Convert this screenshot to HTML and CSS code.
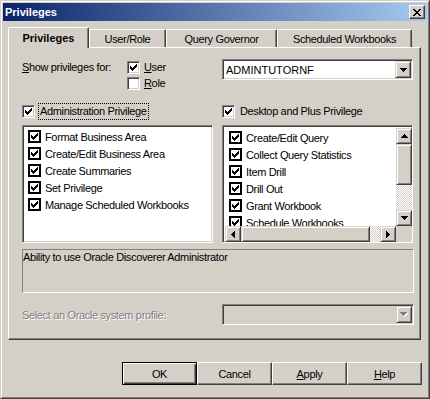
FILE: index.html
```html
<!DOCTYPE html>
<html>
<head>
<meta charset="utf-8">
<title>Privileges</title>
<link rel="stylesheet" href="styles.css">
</head>
<body>
<svg class="defs" width="0" height="0" aria-hidden="true">
  <defs>
    <path id="chk" d="M0 2h1v3H0zM1 3h1v3H1zM2 4h1v3H2zM3 3h1v3H3zM4 2h1v3H4zM5 1h1v3H5zM6 0h1v3H6z"/>
    <path id="dn" d="M0 0h7v1H0zM1 1h5v1H1zM2 2h3v1H2zM3 3h1v1H3z"/>
    <path id="up" d="M3 0h1v1H3zM2 1h3v1H2zM1 2h5v1H1zM0 3h7v1H0z"/>
    <path id="lt" d="M3 0h1v7H3zM2 1h1v5H2zM1 2h1v3H1zM0 3h1v1H0z"/>
    <path id="rt" d="M0 0h1v7H0zM1 1h1v5H1zM2 2h1v3H2zM3 3h1v1H3z"/>
    <path id="x" d="M0 0h2v1H0zM6 0h2v1H6zM1 1h2v1H1zM5 1h2v1H5zM2 2h4v1H2zM3 3h2v1H3zM2 4h4v1H2zM1 5h2v1H1zM5 5h2v1H5zM0 6h2v1H0zM6 6h2v1H6z"/>
  </defs>
</svg>
<div class="window">
  <div class="frame">
    <div class="titlebar">
      <span class="title">Privileges</span>
      <span class="close"><svg width="8" height="7" shape-rendering="crispEdges"><use href="#x"/></svg></span>
    </div>
    <div class="body">
      <div class="tabs">
        <div class="tab sel w1">Privileges</div>
        <div class="tab w2">User/Role</div>
        <div class="tab w3">Query Governor</div>
        <div class="tab w4">Scheduled Workbooks</div>
      </div>
      <div class="panel">
        <div class="grid">
          <div class="showrow">
            <span class="showlabel"><u>S</u>how privileges for:</span>
            <div class="opts">
              <div class="opt"><span class="cb"><svg width="7" height="7" shape-rendering="crispEdges"><use href="#chk"/></svg></span><span class="optlabel"><u>U</u>ser</span></div>
              <div class="opt"><span class="cb"></span><span class="optlabel"><u>R</u>ole</span></div>
            </div>
          </div>
          <div class="combo">
            <span class="combotext">ADMINTUTORNF</span>
            <span class="combobtn"><svg width="7" height="4" shape-rendering="crispEdges"><use href="#dn"/></svg></span>
          </div>

          <div class="hdr"><span class="cb"><svg width="7" height="7" shape-rendering="crispEdges"><use href="#chk"/></svg></span><span class="hdrlabel focus">Administration Privilege</span></div>
          <div class="hdr"><span class="cb"><svg width="7" height="7" shape-rendering="crispEdges"><use href="#chk"/></svg></span><span class="hdrlabel">Desktop and Plus Privilege</span></div>

          <div class="list left">
            <div class="row"><span class="lcb"><svg width="7" height="7" shape-rendering="crispEdges"><use href="#chk"/></svg></span>Format Business Area</div>
            <div class="row"><span class="lcb"><svg width="7" height="7" shape-rendering="crispEdges"><use href="#chk"/></svg></span>Create/Edit Business Area</div>
            <div class="row"><span class="lcb"><svg width="7" height="7" shape-rendering="crispEdges"><use href="#chk"/></svg></span>Create Summaries</div>
            <div class="row"><span class="lcb"><svg width="7" height="7" shape-rendering="crispEdges"><use href="#chk"/></svg></span>Set Privilege</div>
            <div class="row"><span class="lcb"><svg width="7" height="7" shape-rendering="crispEdges"><use href="#chk"/></svg></span>Manage Scheduled Workbooks</div>
          </div>
          <div class="list scroll">
            <div class="items">
              <div class="row"><span class="lcb"><svg width="7" height="7" shape-rendering="crispEdges"><use href="#chk"/></svg></span>Create/Edit Query</div>
              <div class="row"><span class="lcb"><svg width="7" height="7" shape-rendering="crispEdges"><use href="#chk"/></svg></span>Collect Query Statistics</div>
              <div class="row"><span class="lcb"><svg width="7" height="7" shape-rendering="crispEdges"><use href="#chk"/></svg></span>Item Drill</div>
              <div class="row"><span class="lcb"><svg width="7" height="7" shape-rendering="crispEdges"><use href="#chk"/></svg></span>Drill Out</div>
              <div class="row"><span class="lcb"><svg width="7" height="7" shape-rendering="crispEdges"><use href="#chk"/></svg></span>Grant Workbook</div>
              <div class="row"><span class="lcb"><svg width="7" height="7" shape-rendering="crispEdges"><use href="#chk"/></svg></span>Schedule Workbooks</div>
            </div>
            <div class="vscroll">
              <span class="sbtn"><svg width="7" height="4" shape-rendering="crispEdges"><use href="#up"/></svg></span>
              <span class="vthumb"></span>
              <span class="track"></span>
              <span class="sbtn"><svg width="7" height="4" shape-rendering="crispEdges"><use href="#dn"/></svg></span>
            </div>
            <div class="hscroll">
              <span class="sbtn"><svg width="4" height="7" shape-rendering="crispEdges"><use href="#lt"/></svg></span>
              <span class="hthumb"></span>
              <span class="track"></span>
              <span class="sbtn"><svg width="4" height="7" shape-rendering="crispEdges"><use href="#rt"/></svg></span>
            </div>
            <div class="corner"></div>
          </div>
        </div>

        <div class="desc">Ability to use Oracle Discoverer Administrator</div>

        <div class="profile">
          <span class="disabled">Select an Oracle system profile:</span>
          <div class="combo off">
            <span class="combotext"></span>
            <span class="combobtn"><svg width="8" height="5" shape-rendering="crispEdges"><use href="#dn" x="1" y="1" fill="#fff"/><use href="#dn" fill="#808080"/></svg></span>
          </div>
        </div>
      </div>
      <div class="buttons">
        <span class="btn default">OK</span>
        <span class="btn">Cancel</span>
        <span class="btn"><u>A</u>pply</span>
        <span class="btn"><u>H</u>elp</span>
      </div>
    </div>
  </div>
</div>
</body>
</html>
```
FILE: styles.css
```css
* { box-sizing: border-box; }
html, body { margin: 0; padding: 0; }
body {
  width: 430px;
  height: 399px;
  overflow: hidden;
  background: #D4D0C8;
  font-family: "Liberation Sans", Arial, sans-serif;
  font-size: 11px;
  letter-spacing: -0.35px;
  color: #000;
}
.defs { position: absolute; width: 0; height: 0; }
u { text-decoration: underline; text-underline-offset: 1px; }

.window {
  width: 430px;
  height: 399px;
  border: 1px solid;
  border-color: #D4D0C8 #404040 #404040 #D4D0C8;
}
.frame {
  height: 100%;
  border: 1px solid;
  border-color: #fff #808080 #808080 #fff;
  padding: 1px;
  display: flex;
  flex-direction: column;
}

/* title bar */
.titlebar {
  height: 18px;
  flex: none;
  display: flex;
  align-items: center;
  justify-content: space-between;
  padding: 0 2px;
  background: linear-gradient(to right, #0A246A, #A6CAF0);
  color: #fff;
}
.title { font-weight: bold; letter-spacing: 0; }
.close {
  width: 16px;
  height: 14px;
  display: flex;
  align-items: center;
  justify-content: center;
  background: #D4D0C8;
  border: 1px solid;
  border-color: #fff #404040 #404040 #fff;
  box-shadow: inset -1px -1px #808080;
}

/* body */
.body {
  flex: 1;
  display: flex;
  flex-direction: column;
  padding: 6px 5px 0 5px;
}

/* tabs */
.tabs {
  display: flex;
  align-items: flex-end;
  height: 20px;
}
.tab {
  height: 18px;
  display: flex;
  align-items: center;
  justify-content: center;
  background: #D4D0C8;
  border-top: 1px solid #fff;
  border-left: 1px solid #fff;
  border-right: 1px solid #404040;
  box-shadow: inset -1px 0 #808080;
  border-radius: 2px 2px 0 0;
}
.tab.sel {
  height: 21px;
  margin-bottom: -1px;
  position: relative;
  z-index: 1;
  font-weight: bold;
  letter-spacing: 0;
}
.w1 { width: 81px; }
.w2 { width: 77px; }
.w3 { width: 111px; }
.w4 { width: 135px; }

.panel {
  width: 413px;
  height: 293px;
  border: 1px solid;
  border-color: #fff #404040 #404040 #fff;
  box-shadow: inset -1px -1px #808080;
  padding: 11px 0 0 13px;
}

.grid {
  display: grid;
  grid-template-columns: 191px 191px;
  column-gap: 9px;
}

/* show row */
.showrow { display: flex; }
.showlabel { width: 105px; line-height: 16px; }
.opts { display: flex; flex-direction: column; }
.opt { display: flex; align-items: center; height: 16px; }
.optlabel { margin-left: 4px; }

/* checkbox */
.cb {
  width: 13px;
  height: 13px;
  flex: none;
  display: flex;
  align-items: center;
  justify-content: center;
  background: #fff;
  border: 1px solid;
  border-color: #808080 #fff #fff #808080;
  box-shadow: inset 1px 1px #404040, inset -1px -1px #D4D0C8;
}

/* combo */
.combo {
  height: 21px;
  display: flex;
  align-items: center;
  background: #fff;
  border: 1px solid;
  border-color: #808080 #fff #fff #808080;
  box-shadow: inset 1px 1px #404040, inset -1px -1px #D4D0C8;
  padding: 1px;
}
.combotext { flex: 1; padding-left: 2px; letter-spacing: 0; }
.combobtn {
  width: 16px;
  height: 17px;
  display: flex;
  align-items: center;
  justify-content: center;
  background: #D4D0C8;
  border: 1px solid;
  border-color: #D4D0C8 #404040 #404040 #D4D0C8;
  box-shadow: inset 1px 1px #fff, inset -1px -1px #808080;
}
.combo.off { background: #D4D0C8; }

/* section headers */
.hdr {
  display: flex;
  align-items: center;
  height: 17px;
  margin-top: 12px;
}
.hdrlabel {
  margin-left: 3px;
  padding: 0 1px;
  line-height: 15px;
  border: 1px solid transparent;
}
.hdrlabel.focus { border: 1px dotted #000; }

/* lists */
.list {
  height: 118px;
  margin-top: 5px;
  background: #fff;
  border: 1px solid;
  border-color: #808080 #fff #fff #808080;
  box-shadow: inset 1px 1px #404040, inset -1px -1px #D4D0C8;
}
.list.left { padding: 2px 2px 2px 5px; }
.list.scroll {
  padding: 2px;
  display: grid;
  grid-template-columns: 171px 16px;
  grid-template-rows: 98px 16px;
}
.items { overflow: hidden; padding: 1px 0 0 4px; }
.row {
  height: 17px;
  display: flex;
  align-items: center;
  white-space: nowrap;
}
.lcb {
  width: 13px;
  height: 13px;
  flex: none;
  margin-right: 4px;
  display: flex;
  align-items: center;
  justify-content: center;
  background: #fff;
  border: 2px solid #000;
}

/* scrollbars */
.vscroll { display: flex; flex-direction: column; }
.hscroll { display: flex; }
.sbtn {
  width: 16px;
  height: 16px;
  flex: none;
  display: flex;
  align-items: center;
  justify-content: center;
  background: #D4D0C8;
  border: 1px solid;
  border-color: #D4D0C8 #404040 #404040 #D4D0C8;
  box-shadow: inset 1px 1px #fff, inset -1px -1px #808080;
}
.vthumb, .hthumb {
  flex: none;
  background: #D4D0C8;
  border: 1px solid;
  border-color: #D4D0C8 #404040 #404040 #D4D0C8;
  box-shadow: inset 1px 1px #fff, inset -1px -1px #808080;
}
.vthumb { height: 41px; }
.hthumb { width: 129px; }
.track {
  flex: 1;
  background: repeating-conic-gradient(#fff 0 25%, #D4D0C8 0 50%) 0 0 / 2px 2px;
}
.corner { background: #D4D0C8; }

/* description */
.desc {
  width: 392px;
  height: 44px;
  margin-top: 6px;
  border: 1px solid;
  border-color: #808080 #fff #fff #808080;
  padding: 1px 0 0 0;
  line-height: 13px;
}

/* profile row */
.profile {
  display: grid;
  grid-template-columns: 200px 192px;
  align-items: center;
  margin-top: 11px;
  width: 392px;
}
.disabled { color: #808080; text-shadow: 1px 1px #fff; }

/* buttons */
.buttons {
  display: flex;
  justify-content: flex-end;
  margin-top: 22px;
}
.btn {
  width: 75px;
  height: 23px;
  display: flex;
  align-items: center;
  justify-content: center;
  background: #D4D0C8;
  border: 1px solid;
  border-color: #fff #404040 #404040 #fff;
  box-shadow: inset -1px -1px #808080;
}
.btn.default {
  border: 1px solid #000;
  box-shadow: inset 1px 1px #fff, inset -1px -1px #404040, inset -2px -2px #808080;
}
```
